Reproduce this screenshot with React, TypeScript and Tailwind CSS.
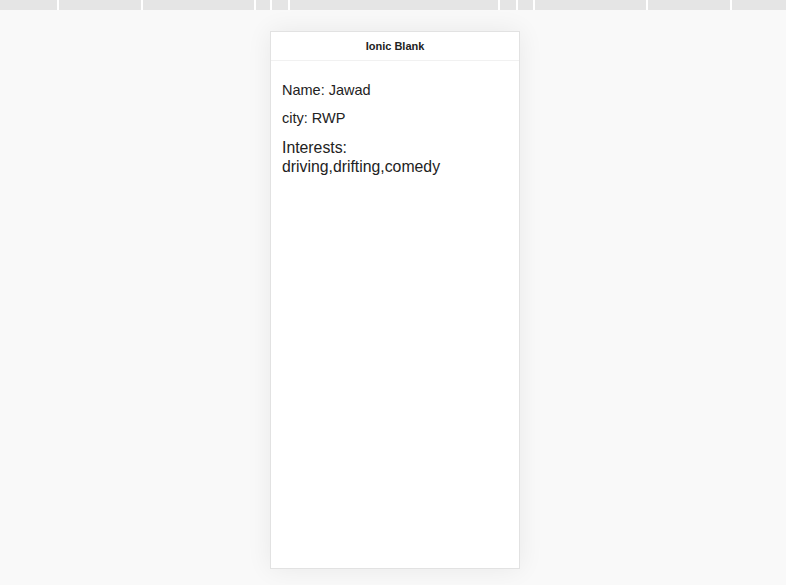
const segments = [59, 84, 113, 16, 18, 210, 18, 17, 113, 84];

function TopBar() {
  return (
    <div className="flex h-[10px] w-full bg-[#e5e5e5]">
      {segments.map((w, i) => (
        <div key={i} className="h-full border-r-2 border-white" style={{ width: w }} />
      ))}
      <div className="flex-1" />
    </div>
  );
}

export default function App() {
  return (
    <div className="min-h-[585px] w-full bg-[#f9f9f9] font-['Liberation_Sans',Arial,sans-serif] text-[#222]">
      <TopBar />
      <div className="ml-[270px] mt-[21px] flex h-[538px] w-[250px] flex-col border border-[#e2e2e2] bg-white shadow-[0_0_24px_rgba(0,0,0,0.07)]">
        {/* Header */}
        <div className="flex h-[29px] items-center justify-center border-b border-[#f1f1f1]">
          <span className="text-[11px] font-bold text-[#222]">Ionic Blank</span>
        </div>

        {/* Content */}
        <div className="px-[11px] pt-[21px]">
          <p className="text-[14.5px] leading-[17px]">Name: Jawad</p>
          <p className="mt-[11px] text-[14.5px] leading-[17px]">city: RWP</p>
          <p className="mt-[11px] text-[15.8px] leading-[19px]">
            Interests:
            <br />
            driving,drifting,comedy
          </p>
        </div>
      </div>
    </div>
  );
}
